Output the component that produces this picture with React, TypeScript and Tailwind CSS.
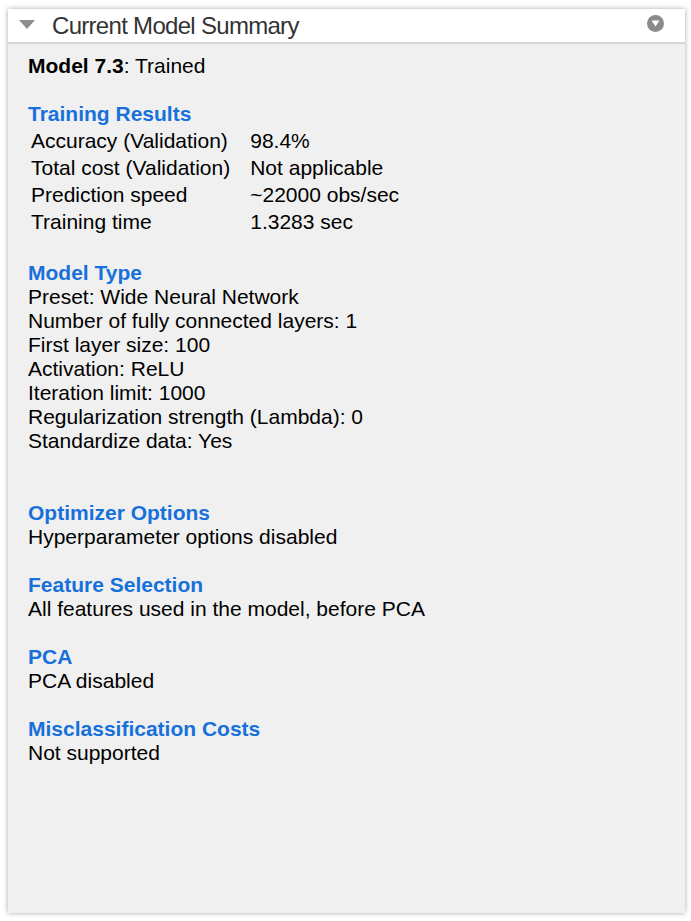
import React from 'react';

const trainingRows: [string, string][] = [
    ['Accuracy (Validation)', '98.4%'],
    ['Total cost (Validation)', 'Not applicable'],
    ['Prediction speed', '~22000 obs/sec'],
    ['Training time', '1.3283 sec'],
];

const modelType = [
    'Preset: Wide Neural Network',
    'Number of fully connected layers: 1',
    'First layer size: 100',
    'Activation: ReLU',
    'Iteration limit: 1000',
    'Regularization strength (Lambda): 0',
    'Standardize data: Yes',
];

const SectionTitle: React.FC<{ children: React.ReactNode }> = ({ children }) => (
    <div className="font-bold text-[#1870db]">{children}</div>
);

export default function App() {
    return (
        <div className="w-[691px] h-[921px] bg-white pt-[9px] px-[8px] font-['Liberation_Sans',Arial,sans-serif]">
            <div className="h-[904px] w-[677px] bg-[#f0f0f0] shadow-[0_0_5px_rgba(0,0,0,0.35)] flex flex-col">
                {/* header */}
                <div className="h-[35px] bg-white border-b-2 border-[#d6d6d6] flex items-center pl-[11px] pr-[21px] shrink-0">
                    <svg width="16" height="10" viewBox="0 0 16 10" className="mr-[17px] mt-[-2px]">
                        <path d="M0 0 H16 L8 9 Z" fill="#8e8e8e" />
                    </svg>
                    <span className="text-[24px] leading-none text-[#333] tracking-[-0.7px]">Current Model Summary</span>
                    <svg width="17" height="17" viewBox="0 0 17 17" className="ml-auto mt-[-4px]">
                        <circle cx="8.5" cy="8.5" r="8.5" fill="#8a8a8a" />
                        <path d="M4.5 5.5 H12.5 L8.5 11.5 Z" fill="#ffffff" />
                    </svg>
                </div>

                {/* body */}
                <div className="pl-[20px] pt-[10px] text-[21px] leading-[24px] text-black">
                    <div>
                        <span className="font-bold">Model 7.3</span>: Trained
                    </div>

                    <div className="mt-[24px]">
                        <SectionTitle>Training Results</SectionTitle>
                        <table className="mt-[1px] border-collapse">
                            <tbody>
                                {trainingRows.map(([label, value]) => (
                                    <tr key={label} className="h-[27px]">
                                        <td className="pl-[3px] pr-[20px] p-0 whitespace-nowrap">{label}</td>
                                        <td className="p-0 whitespace-nowrap">{value}</td>
                                    </tr>
                                ))}
                            </tbody>
                        </table>
                    </div>

                    <div className="mt-[26px]">
                        <SectionTitle>Model Type</SectionTitle>
                        {modelType.map((line) => (
                            <div key={line}>{line}</div>
                        ))}
                    </div>

                    <div className="mt-[48px]">
                        <SectionTitle>Optimizer Options</SectionTitle>
                        <div>Hyperparameter options disabled</div>
                    </div>

                    <div className="mt-[24px]">
                        <SectionTitle>Feature Selection</SectionTitle>
                        <div>All features used in the model, before PCA</div>
                    </div>

                    <div className="mt-[24px]">
                        <SectionTitle>PCA</SectionTitle>
                        <div>PCA disabled</div>
                    </div>

                    <div className="mt-[24px]">
                        <SectionTitle>Misclassification Costs</SectionTitle>
                        <div>Not supported</div>
                    </div>
                </div>
            </div>
        </div>
    );
}
